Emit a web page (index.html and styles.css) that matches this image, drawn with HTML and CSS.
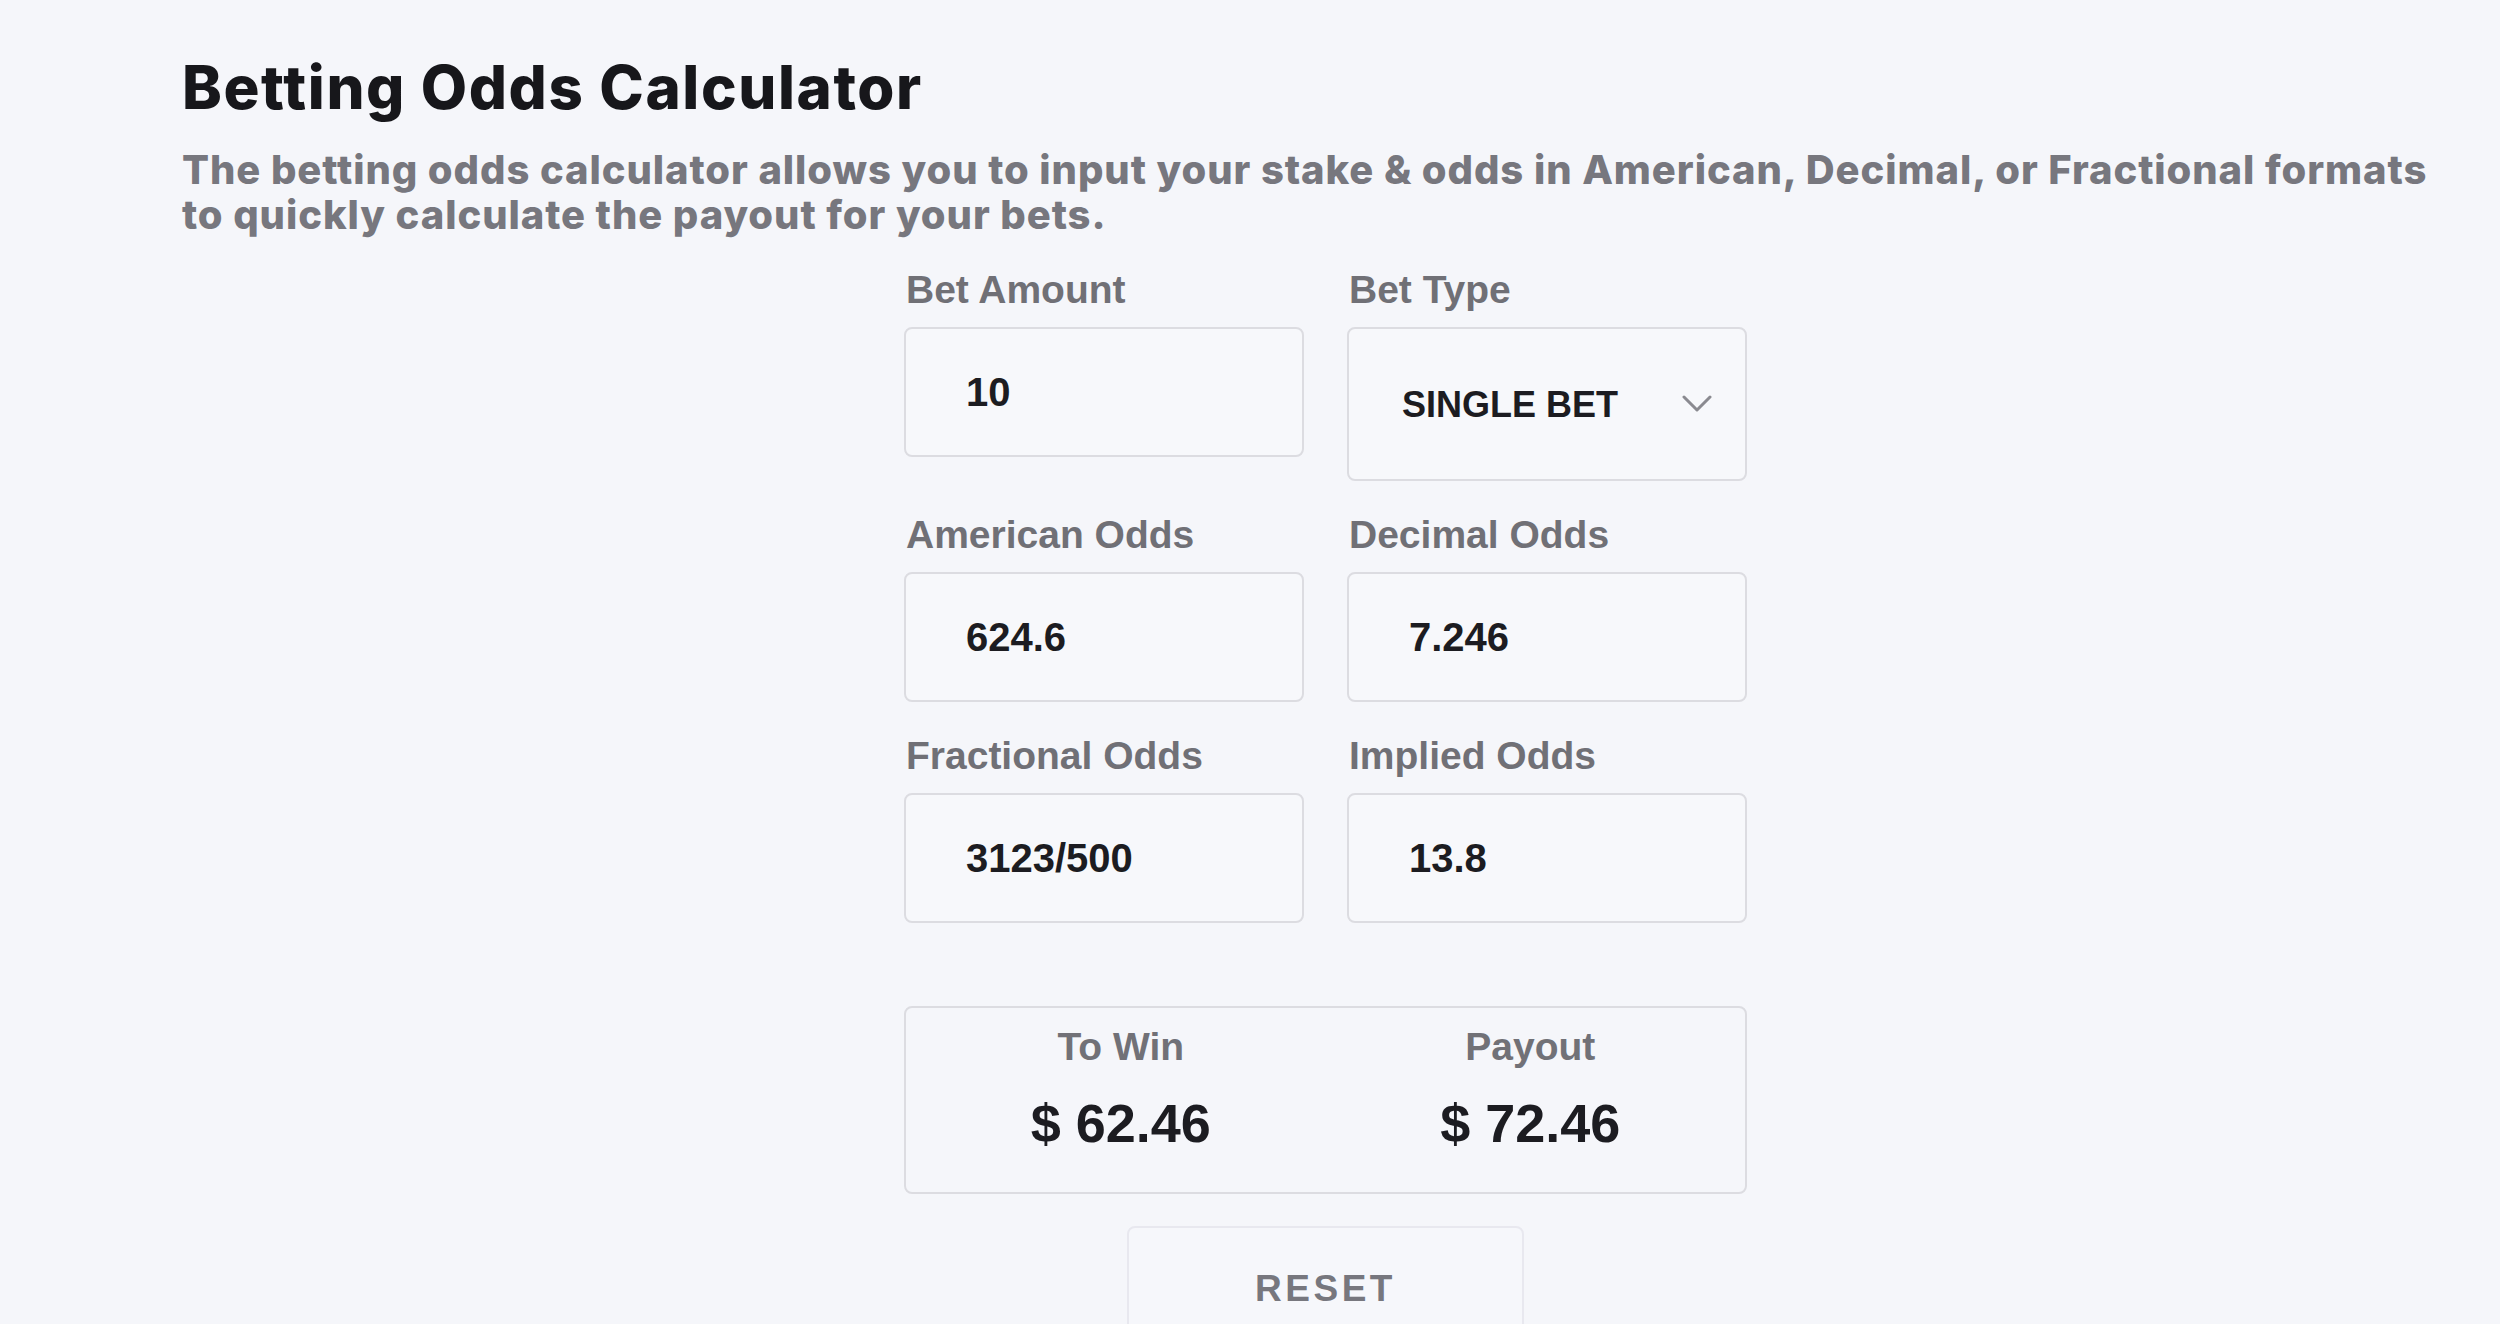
FILE: index.html
```html
<!DOCTYPE html>
<html lang="en">
<head>
  <meta charset="UTF-8" />
  <title>Betting Odds Calculator</title>
  <link rel="stylesheet" href="styles.css">
</head>
<body>

  <div class="page">
    <h1>Betting Odds Calculator</h1>
    <p class="intro">The betting odds calculator allows you to input your stake &amp; odds in American, Decimal, or Fractional formats<br>to quickly calculate the payout for your bets.</p>

    <form class="calculator" id="oddsForm">
      <div class="fields">
        <div class="field">
          <label for="amount">Bet Amount</label>
          <input type="text" id="amount" value="10" />
        </div>
        <div class="field">
          <label for="betType">Bet Type</label>
          <div class="select-wrap">
            <select id="betType">
              <option>SINGLE BET</option>
              <option>PARLAY</option>
            </select>
            <svg class="chevron" width="30" height="17" viewBox="0 0 30 17">
              <path d="M2 2 L15 15 L28 2" fill="none" stroke="#8a8a90" stroke-width="3" stroke-linecap="round" stroke-linejoin="round" />
            </svg>
          </div>
        </div>
        <div class="field">
          <label for="american">American Odds</label>
          <input type="text" id="american" value="624.6" />
        </div>
        <div class="field">
          <label for="decimal">Decimal Odds</label>
          <input type="text" id="decimal" value="7.246" />
        </div>
        <div class="field">
          <label for="fractional">Fractional Odds</label>
          <input type="text" id="fractional" value="3123/500" />
        </div>
        <div class="field">
          <label for="implied">Implied Odds</label>
          <input type="text" id="implied" value="13.8" />
        </div>
      </div>

      <div class="results">
        <div class="result">
          <span class="result-label">To Win</span>
          <span class="result-value" id="toWin">$ 62.46</span>
        </div>
        <div class="result">
          <span class="result-label">Payout</span>
          <span class="result-value" id="payout">$ 72.46</span>
        </div>
      </div>

      <button type="reset" class="reset">RESET</button>
    </form>
  </div>

</body>
</html>
```

FILE: styles.css
```css
body {
  margin: 0;
  background: #f5f6fa;
  font-family: 'Liberation Sans', Arial, sans-serif;
  color: #1c1c21;
}

.page {
  padding: 51px 29px 0 180px;
}

h1 {
  font-family: 'Inter', sans-serif;
  font-weight: 800;
  font-size: 60px;
  line-height: 72px;
  letter-spacing: 1.6px;
  margin: 0 0 24px 2px;
  color: #17171b;
}

.intro {
  font-family: 'Inter', sans-serif;
  font-weight: 800;
  font-size: 40px;
  line-height: 45px;
  letter-spacing: 0.92px;
  margin: 0 0 30px 2px;
  color: #77777e;
}

.calculator {
  max-width: 843px;
  margin: 0 auto;
}

.fields {
  display: grid;
  grid-template-columns: 1fr 1fr;
  column-gap: 43px;
  row-gap: 31px;
  align-items: start;
}

.field label {
  display: block;
  font-size: 39px;
  line-height: 45px;
  font-weight: 700;
  color: #707076;
  margin: 0 0 15px 2px;
}

.field input,
.field select {
  box-sizing: border-box;
  width: 100%;
  height: 130px;
  border: 2px solid #dcdce1;
  border-radius: 8px;
  background: #f7f8fb;
  font-family: 'Liberation Sans', Arial, sans-serif;
  font-weight: 700;
  font-size: 40px;
  color: #1c1c21;
  padding: 0 0 0 60px;
  outline: none;
}

.select-wrap {
  position: relative;
}

.field select {
  height: 154px;
  font-size: 36px;
  padding-left: 53px;
  appearance: none;
  -webkit-appearance: none;
}

.chevron {
  position: absolute;
  right: 35px;
  top: 68px;
  pointer-events: none;
}

.results {
  display: grid;
  grid-template-columns: 1fr 1fr;
  margin-top: 83px;
  padding: 16px 10px 38px;
  border: 2px solid #dcdce1;
  border-radius: 8px;
}

.result {
  display: flex;
  flex-direction: column;
  align-items: center;
}

.result-label {
  font-size: 39px;
  line-height: 45px;
  font-weight: 700;
  color: #717177;
}

.result-value {
  margin-top: 23px;
  font-size: 54px;
  line-height: 62px;
  font-weight: 700;
  color: #1c1c21;
}

.reset {
  display: block;
  width: 397px;
  height: 126px;
  margin: 32px auto 0;
  border: 2px solid #e8e8ef;
  border-radius: 8px;
  background: #f6f7fb;
  font-family: 'Liberation Sans', Arial, sans-serif;
  font-weight: 700;
  font-size: 37px;
  letter-spacing: 3.5px;
  color: #77777e;
  cursor: pointer;
}
```
